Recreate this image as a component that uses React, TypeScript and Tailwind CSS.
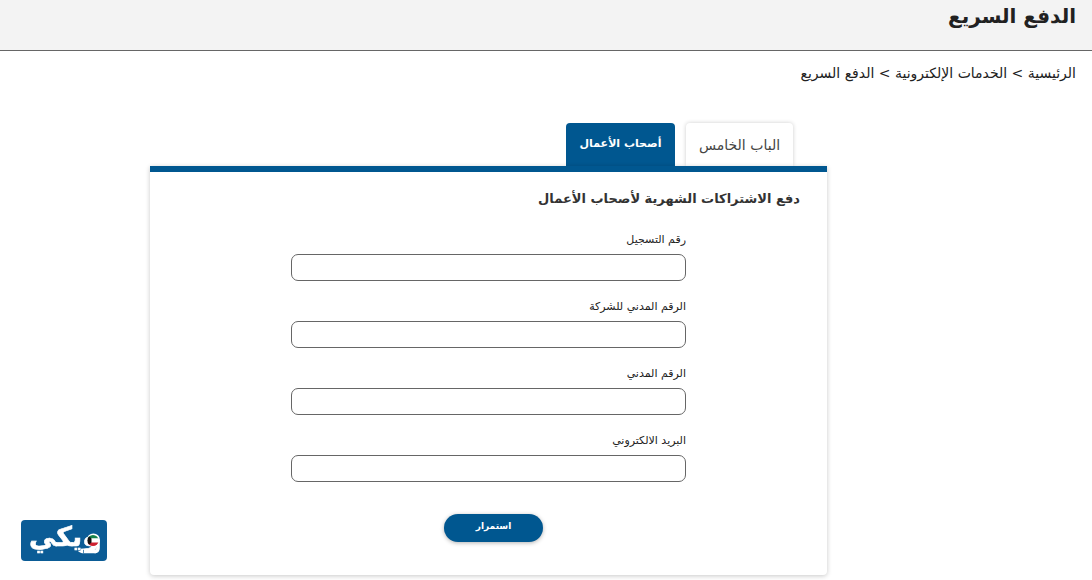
const fields = [
  { id: "registration", label: "رقم التسجيل", type: "text" },
  { id: "company-civil-id", label: "الرقم المدني للشركة", type: "text" },
  { id: "civil-id", label: "الرقم المدني", type: "text" },
  { id: "email", label: "البريد الالكتروني", type: "email" },
];

const WikiLogo = () => (
  <svg viewBox="0 0 86 41" className="h-[41px] w-[86px]" role="img" aria-label="ويكي">
    <rect width="86" height="41" rx="4" fill="#0b5c96" />
    <text
      x="43"
      y="26"
      fill="#fff"
      stroke="#fff"
      strokeWidth="0.6"
      fontSize="27"
      fontWeight="700"
      fontFamily="'DejaVu Sans', sans-serif"
      textAnchor="middle"
      direction="rtl"
    >
      ويكي
    </text>
    {/* pen */}
    <path d="M57 31.5l4-1.7h14v3.4H61z" fill="#fff" />
    <path d="M62.5 29.8v3.4" stroke="#0b5c96" strokeWidth="0.7" />
    <path d="M77 20v8q0 3.5-3.5 3.5" fill="none" stroke="#fff" strokeWidth="3.6" />
    {/* flag */}
    <clipPath id="flag">
      <circle cx="72" cy="20.5" r="5.6" />
    </clipPath>
    <circle cx="72.4" cy="20" r="6.6" fill="#fff" />
    <g clipPath="url(#flag)">
      <path d="M66 14h12v4.5H66z" fill="#16824a" />
      <path d="M66 18.5h12v4H66z" fill="#fff" />
      <path d="M66 22.5h12v4.5H66z" fill="#ce2030" />
      <path d="M66 14.5l4.5 4v4L66 26.5z" fill="#111" />
    </g>
  </svg>
);

const App = () => {
  return (
    <div
      dir="rtl"
      className="min-h-screen bg-white font-['DejaVu_Sans',sans-serif] text-[#212121]"
    >
      <header className="h-[51px] border-b border-[#666] bg-[#f3f3f3] px-4">
        <h1 className="text-xl leading-8 font-bold">الدفع السريع</h1>
      </header>

      <nav aria-label="breadcrumb" className="px-4 pt-3 text-sm leading-5">
        <a href="#home">الرئيسية</a> &gt; <a href="#services">الخدمات الإلكترونية</a> &gt;{" "}
        <span>الدفع السريع</span>
      </nav>

      <main className="mr-[265px] w-[62%] pt-10">
        {/* Tabs */}
        <div role="tablist" className="flex gap-[11px] pr-[34px]">
          <button
            role="tab"
            aria-selected="false"
            className="h-[43px] w-[107px] rounded-t bg-white text-sm whitespace-nowrap text-[#444] shadow-[0_0_4px_rgba(0,0,0,0.2)]"
          >
            الباب الخامس
          </button>
          <button
            role="tab"
            aria-selected="true"
            className="h-[43px] w-[109px] rounded-t bg-[#005790] text-[11px] font-bold whitespace-nowrap text-white"
          >
            أصحاب الأعمال
          </button>
        </div>

        {/* Payment form */}
        <section className="relative rounded-b border-t-6 border-[#005790] bg-white pb-[33px] shadow-[0_1px_5px_rgba(0,0,0,0.22)]">
          <h2 className="px-[27px] pt-[11px] text-[13px] leading-8 font-bold text-[#333]">
            دفع الاشتراكات الشهرية لأصحاب الأعمال
          </h2>
          <form className="mx-[141px] pt-[17px]">
            {fields.map((field) => (
              <div key={field.id} className="pb-[18px]">
                <label
                  htmlFor={field.id}
                  className="block pb-[6px] text-[11px] leading-4 text-[#222]"
                >
                  {field.label}
                </label>
                <input
                  id={field.id}
                  type={field.type}
                  className="block h-[27px] w-full rounded-[7px] border border-[#666] px-2 text-xs"
                />
              </div>
            ))}
            <button
              type="submit"
              className="mt-[14px] mr-[143px] block h-7 w-[99px] rounded-full bg-[#005790] pb-[2px] text-[9px] font-bold text-white shadow-[0_1px_4px_rgba(0,0,0,0.3)]"
            >
              استمرار
            </button>
          </form>
        </section>
      </main>

      <a href="#wiki" className="fixed bottom-[19px] left-[21px]">
        <WikiLogo />
      </a>
    </div>
  );
};

export default App;
